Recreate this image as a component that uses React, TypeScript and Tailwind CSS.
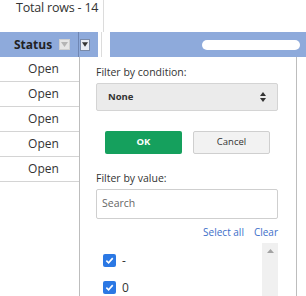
import React from 'react'

const rows = ['Open', 'Open', 'Open', 'Open', 'Open']

function Check() {
  return (
    <span className="w-[13px] h-[13px] rounded-[2px] bg-[#2b78e4] flex items-center justify-center">
      <svg width="9" height="9" viewBox="0 0 10 10"><path d="M1.5 5.2 L4 7.5 L8.6 2.4" stroke="white" strokeWidth="1.8" fill="none" /></svg>
    </span>
  )
}

export default function App() {
  return (
    <div className="relative w-[306px] h-[296px] overflow-hidden bg-white font-['Open_Sans',sans-serif] text-[#333]">
      {/* top bar */}
      <div className="flex h-[32px]">
        <div className="w-[104px] border-r border-[#dcdcdc] pl-[16px] pt-[1px] text-[12.5px] tracking-[-0.2px] text-[#333] leading-[14px] whitespace-nowrap">Total rows - 14</div>
        <div className="flex-1" />
      </div>

      {/* header */}
      <div className="flex h-[25px]">
        <div className="w-[98px] bg-[#8eaadb] flex items-center">
          <span className="ml-[14px] text-[12px] font-bold text-[#222]">Status</span>
          <span className="ml-[7px] w-[11px] h-[11px] bg-[#e6e6e6] border border-[#d0d0d0] flex items-center justify-center">
            <svg width="7" height="5" viewBox="0 0 7 5"><path d="M0 0 H7 L3.5 5 Z" fill="#b5b5b5" /></svg>
          </span>
          <span className="ml-[8px] h-full border-l border-[#6f86b3]" />
          <span className="ml-[1px] w-[10px] h-[12px] bg-[#e9edf5] border border-[#7a8aa8] flex items-center justify-center">
            <svg width="6" height="5" viewBox="0 0 7 5"><path d="M0 0 H7 L3.5 5 Z" fill="#333" /></svg>
          </span>
        </div>
        <div className="w-[12px] flex justify-center"><span className="w-px h-full bg-[#dcdcdc] -ml-[5px]" /></div>
        <div className="flex-1 bg-[#8eaadb] flex items-center justify-end pr-[6px]">
          <span className="w-[98px] h-[10px] rounded-full bg-white" />
        </div>
      </div>

      {/* status cells */}
      <div className="w-[80px] flex flex-col">
        {rows.map((r, i) => (
          <div key={i} className="h-[25px] border-b border-r border-[#d4d4d4] flex items-center justify-center pl-[8px] text-[12px] text-[#333]">{r}</div>
        ))}
      </div>

      {/* filter dropdown */}
      <div className="absolute left-[79px] top-[57px] w-[218px] h-[239px] bg-white border-l border-r border-[#bdbdbd] pl-[16px] pr-[18px] pt-[8px] flex flex-col text-[#333]">
        <div className="text-[10.5px] leading-[14px]">Filter by condition:</div>
        <div className="mt-[4px] h-[28px] bg-[#ebebeb] border border-[#d4d4d4] rounded-[2px] flex items-center justify-between px-[11px]">
          <span className="text-[9.5px] font-bold">None</span>
          <svg width="6" height="10" viewBox="0 0 6 10"><path d="M0 4 L3 0 L6 4 Z M0 6 L6 6 L3 10 Z" fill="#333" /></svg>
        </div>
        <div className="mt-[20px] flex gap-[11px] pl-[9px]">
          <button className="w-[77px] h-[23px] rounded-[2px] bg-[#15a05d] text-white text-[9.5px] font-bold">OK</button>
          <button className="w-[77px] h-[23px] rounded-[2px] bg-[#f2f2f2] border border-[#cfcfcf] text-[9.5px] text-[#333]">Cancel</button>
        </div>
        <div className="mt-[17px] text-[10.5px] leading-[14px]">Filter by value:</div>
        <div className="mt-[4px] h-[30px] border border-[#cfcfcf] rounded-[2px] flex items-center px-[5px] text-[10.5px] text-[#666]">Search</div>
        <div className="mt-[7px] flex justify-end gap-[10px] text-[10px] text-[#3d6ec9] leading-[13px]">
          <span>Select all</span>
          <span>Clear</span>
        </div>
        <div className="mt-[4px] flex flex-1">
          <div className="flex-1 flex flex-col pl-[7px] pt-[11px] gap-[14px]">
            <div className="flex items-center gap-[6px] text-[12px] leading-[13px]"><Check /><span>-</span></div>
            <div className="flex items-center gap-[6px] text-[12px] leading-[13px]"><Check /><span>0</span></div>
          </div>
          <div className="w-[16px] bg-[#f0f0f0] flex justify-center pt-[6px]">
            <svg width="7" height="4" viewBox="0 0 7 4"><path d="M0 4 L3.5 0 L7 4 Z" fill="#a3a3a3" /></svg>
          </div>
        </div>
      </div>
    </div>
  )
}
